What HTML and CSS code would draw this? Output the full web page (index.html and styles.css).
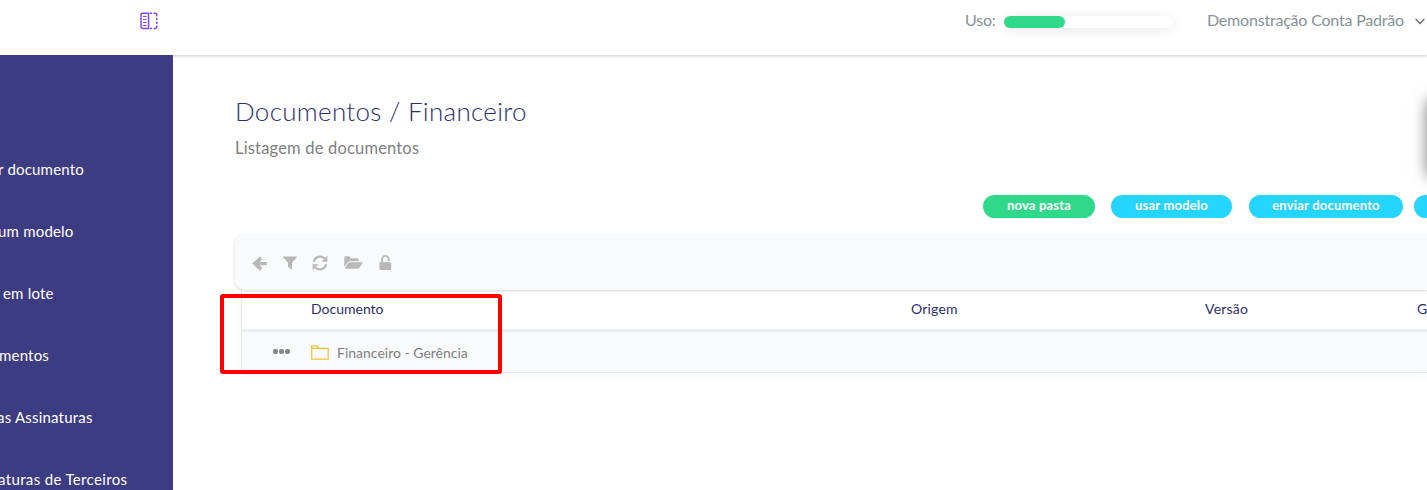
FILE: index.html
```html
<!DOCTYPE html>
<html lang="pt-BR">
<head>
  <meta charset="UTF-8" />
  <meta name="viewport" content="width=device-width, initial-scale=1.0"/>
  <title>Documentos / Financeiro</title>
  <link rel="stylesheet" href="styles.css">
</head>
<body>

  <!-- Top bar -->
  <header class="topbar">
    <svg class="menu-toggle" width="18" height="18" viewBox="0 0 18 18" fill="none" stroke="#8048f0" stroke-width="1.5">
      <path d="M8.6 1.2H2.6Q1 1.2 1 2.8V14.8Q1 16.4 2.6 16.4H8.6Z"/>
      <path d="M3 4.5H6.6M3 7.5H6.6M3 10.5H6.6M3 13.5H6.6" stroke-width="1.2"/>
      <path d="M10 1.2H12.2M13.6 1.2H15Q16.8 1.2 16.8 3V4.4M16.8 6V8.2M16.8 9.8V12M16.8 13.4V14.7Q16.8 16.4 15 16.4H13.6M12.2 16.4H10"/>
    </svg>
    <span class="usage-label">Uso:</span>
    <div class="usage-bar"><div class="usage-fill" style="width: 36%"></div></div>
    <span class="account">Demonstração Conta Padrão</span>
    <svg class="chevron" width="10" height="7" viewBox="0 0 10 7" fill="none" stroke="#666" stroke-width="1.4"><path d="M.6 1L5 5.4L9.4 1"/></svg>
  </header>

  <div class="layout">
    <!-- Sidebar -->
    <nav class="sidebar">
      <a class="nav-item nav-doc">r documento</a>
      <a class="nav-item nav-model">um modelo</a>
      <a class="nav-item nav-batch">em lote</a>
      <a class="nav-item nav-docs">mentos</a>
      <a class="nav-item nav-sign">as Assinaturas</a>
      <a class="nav-item nav-third">aturas de Terceiros</a>
    </nav>

    <!-- Content -->
    <main class="content">
      <h1>Documentos / Financeiro</h1>
      <p class="subtitle">Listagem de documentos</p>

      <div class="actions">
        <button class="btn btn-new">nova pasta</button>
        <button class="btn btn-model">usar modelo</button>
        <button class="btn btn-send">enviar documento</button>
        <button class="btn btn-more"></button>
      </div>

      <div class="toolbar">
        <svg class="tool-back" width="15" height="15" viewBox="0 0 15 15"><path d="M14.8 6V9.2H7.6L10.2 11.9L7.9 14.7L.2 7.6L7.9 .5L10.2 3.3L7.6 6Z"/></svg>
        <svg class="tool-filter" width="14" height="14" viewBox="0 0 14 14"><path d="M.2.5H13.8V1.6L9 6.8V13.8L5 10.8V6.8L.2 1.6Z"/></svg>
        <svg class="tool-sync" width="16" height="16" viewBox="0 0 16 16"><path d="M1.9 6.7A6.2 6.2 0 0 1 12.5 3.6M14.1 9.3A6.2 6.2 0 0 1 3.5 12.4" fill="none" stroke="#b8b8b8" stroke-width="2.2"/><path d="M15.4.8V6.8H9.4ZM.6 15.2V9.2H6.6Z"/></svg>
        <svg class="tool-folder" width="19" height="14" viewBox="0 0 19 14"><path d="M.3 11.3V1.5Q.3.3 1.5.3H5Q6.1.3 6.1 1.5V2.2H13.5Q14.7 2.2 14.7 3.4V5.2H6Q4.5 5.2 3.6 6.4Z"/><path d="M5.8 6.3H18.3Q19 6.6 18.5 7.3L15.4 11.7Q14.6 12.8 13.5 12.8H1.7Q.6 12.7 1.2 11.8L4.2 7.2Q4.8 6.3 5.8 6.3Z"/></svg>
        <svg class="tool-lock" width="13" height="16" viewBox="0 0 13 16"><path d="M3 8V4.3A3.4 3.4 0 0 1 9.8 4.3V6" fill="none" stroke="#b8b8b8" stroke-width="1.8"/><rect x=".4" y="7.2" width="11.8" height="7.8" rx="1"/></svg>
      </div>

      <div class="table">
        <div class="row row-head">
          <span></span>
          <span>Documento</span>
          <span class="col-origin">Origem</span>
          <span class="col-version">Versão</span>
          <span class="col-last">G</span>
        </div>
        <div class="row row-item">
          <span class="dots"><i></i><i></i><i></i></span>
          <span class="doc-name">
            <svg width="18" height="15" viewBox="0 0 18 15" fill="none" stroke="#f9c02c" stroke-width="1.2"><path d="M.7 3.3V.8H6.3L7.7 3.3H17.2V14.1H.7V3.3H7.7"/></svg>
            Financeiro - Gerência
          </span>
        </div>
      </div>
    </main>
  </div>

  <!-- Highlight frame and floating panel at the screen edge -->
  <div class="highlight"></div>
  <div class="side-panel"></div>

</body>
</html>
```
FILE: styles.css
```css
* { margin: 0; padding: 0; box-sizing: border-box; }
body {
  font-family: 'Lato', sans-serif;
  background: #fff;
  width: 1427px;
  height: 490px;
  overflow: hidden;
  position: relative;
  white-space: nowrap;
}

.topbar {
  height: 55px;
  display: flex;
  padding-left: 140px;
  color: #869297;
  font-size: 16px;
  line-height: 20px;
  letter-spacing: -0.2px;
  box-shadow: 0 1px 3px rgba(0, 0, 0, 0.22);
}
.menu-toggle { margin-top: 12px; }
.usage-label { margin: 10px 0 0 807px; width: 39px; }
.usage-bar {
  width: 169px;
  height: 12px;
  margin-top: 16px;
  border-radius: 6px;
  background: #fff;
  box-shadow: 0 2px 12px rgba(60, 60, 100, 0.12);
}
.usage-fill {
  height: 100%;
  border-radius: 6px;
  background: #2fd989;
}
.account { margin: 10px 0 0 34px; width: 208px; }
.chevron { margin-top: 18px; flex-shrink: 0; }

.layout { display: flex; height: 435px; }

.sidebar {
  width: 173px;
  flex-shrink: 0;
  padding-top: 83px;
  background: #3d3c82;
  overflow: hidden;
}
.nav-item {
  display: block;
  height: 62px;
  line-height: 62px;
  font-size: 15px;
  letter-spacing: 0.2px;
  color: #fff;
}
.nav-doc { margin-left: -2px; }
.nav-model { margin-left: -2px; }
.nav-batch { margin-left: 3px; }
.nav-docs { margin-left: -1px; }
.nav-sign { margin-left: -3px; }
.nav-third { margin-left: -2px; letter-spacing: 0.35px; }

.content {
  flex: 1;
  min-width: 0;
  padding: 38px 0 0 62px;
  overflow: hidden;
}
h1 {
  font-size: 26px;
  font-weight: 300;
  line-height: 36px;
  letter-spacing: 0.3px;
  color: #2f2e6b;
}
.subtitle {
  margin-top: 9px;
  font-size: 16.5px;
  line-height: 20px;
  letter-spacing: 0.18px;
  color: #808080;
}

.actions {
  display: flex;
  margin: 37px 0 0 748px;
}
.btn {
  flex-shrink: 0;
  height: 23px;
  border: none;
  border-radius: 12px;
  padding-bottom: 3px;
  background: #25d4ff;
  color: #fff;
  font-family: 'Lato', sans-serif;
  font-size: 13px;
  font-weight: bold;
  letter-spacing: 0.2px;
}
.btn-new { width: 112px; margin-right: 16px; background: #2fd989; }
.btn-model { width: 121px; margin-right: 17px; }
.btn-send { width: 154px; margin-right: 11px; }
.btn-more { width: 13px; border-radius: 12px 0 0 12px; }

.toolbar {
  height: 56px;
  margin-top: 16px;
  padding: 2px 0 0 17px;
  display: flex;
  align-items: center;
  position: relative;
  border-radius: 10px 0 0 10px;
  background: #f9fafc;
  box-shadow: 0 1px 3px rgba(0, 0, 0, 0.17);
  fill: #b8b8b8;
}
.tool-filter { margin-left: 16px; }
.tool-sync { margin-left: 15px; }
.tool-folder { margin-left: 16px; }
.tool-lock { margin-left: 16px; }

.table {
  margin-left: 6px;
  border-left: 1px solid #e6e8ea;
  border-bottom: 1px solid #e4e6e8;
  box-shadow: 0 4px 10px rgba(0, 0, 0, 0.03);
}
.row {
  display: grid;
  grid-template-columns: 69px 600px 294px 1fr 10px;
  align-items: center;
  font-size: 14px;
}
.row-head {
  height: 42px;
  padding-bottom: 3px;
  border-bottom: 3px solid #ebedef;
  color: #2f2e6b;
}
.col-origin, .col-version { letter-spacing: 0.2px; }
.col-last { overflow: hidden; }
.row-item {
  height: 40px;
  background: #f9fafc;
  color: #808080;
}
.dots {
  display: flex;
  gap: 1px;
  padding: 0 0 2px 31px;
}
.dots i {
  width: 5px;
  height: 5px;
  border-radius: 2px;
  background: #858585;
}
.doc-name {
  display: flex;
  align-items: center;
  gap: 8px;
}

.highlight {
  position: absolute;
  left: 220px;
  top: 294px;
  width: 282px;
  height: 80px;
  border: 4px solid #ff0000;
  border-radius: 3px;
}
.side-panel {
  position: absolute;
  left: 1427px;
  top: 100px;
  width: 50px;
  height: 76px;
  box-shadow: 0 0 14px rgba(0, 0, 0, 0.5);
}
```
